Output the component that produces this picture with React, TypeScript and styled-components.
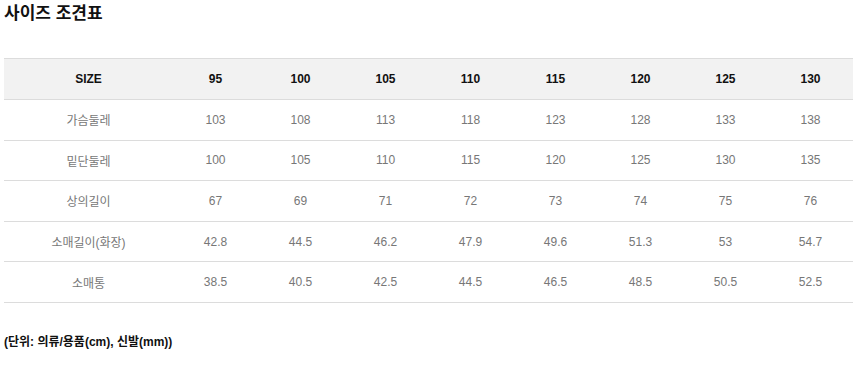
import React from "react"
import styled, { createGlobalStyle } from "styled-components"

const GlobalStyle = createGlobalStyle`
  body {
    margin: 0;
    background: #fff;
    font-family: "Liberation Sans", Arial, "Noto Sans CJK KR", sans-serif;
  }
`

const Page = styled.div`
  padding: 2px 4px 0 4px;
  width: 849px;
`

const Title = styled.h2`
  margin: 0;
  font-size: 17px;
  font-weight: 700;
  color: #111;
  line-height: 24px;
`

const SizeTable = styled.table`
  width: 849px;
  margin-top: 32px;
  border-collapse: collapse;
  table-layout: fixed;
  border-top: 1px solid #dcdcdc;
`

const HeadCell = styled.th<{ first?: boolean }>`
  width: ${(p) => (p.first ? "169px" : "85px")};
  height: 40px;
  background: #f2f2f2;
  border-bottom: 1px solid #dcdcdc;
  font-size: 12px;
  font-weight: 700;
  color: #111;
  text-align: center;
  padding: 0;
`

const Row = styled.tr`
  height: 40.6px;
`

const Cell = styled.td`
  border-bottom: 1px solid #dcdcdc;
  font-size: 12px;
  color: #777;
  text-align: center;
  padding: 0;
`

const Note = styled.p`
  margin: 31px 0 0 0;
  font-size: 12px;
  font-weight: 700;
  color: #111;
  line-height: 16px;
`

const sizes = ["95", "100", "105", "110", "115", "120", "125", "130"]

const rows: { label: string; values: string[] }[] = [
  { label: "가슴둘레", values: ["103", "108", "113", "118", "123", "128", "133", "138"] },
  { label: "밑단둘레", values: ["100", "105", "110", "115", "120", "125", "130", "135"] },
  { label: "상의길이", values: ["67", "69", "71", "72", "73", "74", "75", "76"] },
  { label: "소매길이(화장)", values: ["42.8", "44.5", "46.2", "47.9", "49.6", "51.3", "53", "54.7"] },
  { label: "소매통", values: ["38.5", "40.5", "42.5", "44.5", "46.5", "48.5", "50.5", "52.5"] },
]

export default function App() {
  return (
    <Page>
      <GlobalStyle />
      <Title>사이즈 조견표</Title>
      <SizeTable>
        <thead>
          <tr>
            <HeadCell first>SIZE</HeadCell>
            {sizes.map((s) => (
              <HeadCell key={s}>{s}</HeadCell>
            ))}
          </tr>
        </thead>
        <tbody>
          {rows.map((r) => (
            <Row key={r.label}>
              <Cell>{r.label}</Cell>
              {r.values.map((v, i) => (
                <Cell key={i}>{v}</Cell>
              ))}
            </Row>
          ))}
        </tbody>
      </SizeTable>
      <Note>(단위: 의류/용품(cm), 신발(mm))</Note>
    </Page>
  )
}
